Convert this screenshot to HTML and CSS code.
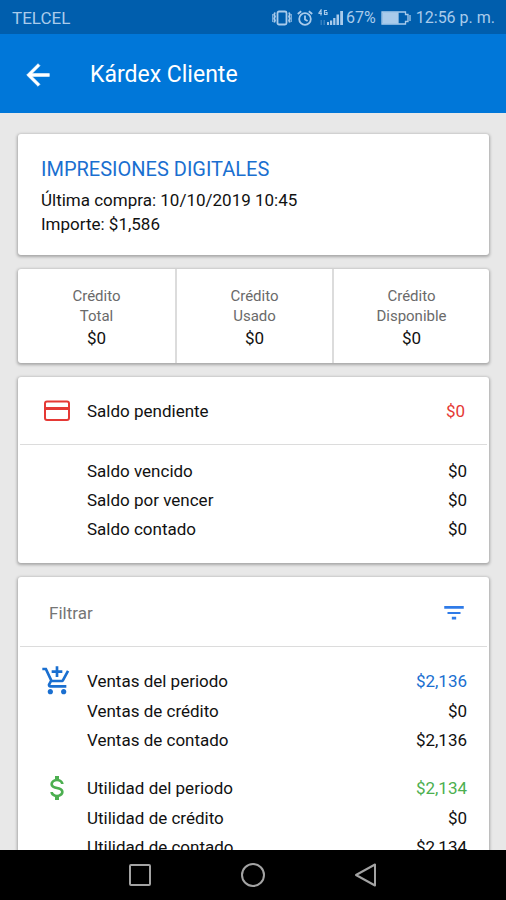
FILE: index.html
```html
<!DOCTYPE html>
<html lang="es">
<head>
<meta charset="utf-8">
<meta name="viewport" content="width=device-width, initial-scale=1">
<title>Kárdex Cliente</title>
<link rel="stylesheet" href="styles.css">
</head>
<body>
<div class="status">
  <span>TELCEL</span>
  <div class="status-right">
    <svg width="20" height="16" viewBox="0 0 20 16" fill="none" stroke="currentColor" stroke-width="1.8"><rect x="5.500" y="1.500" width="9" height="13" rx="1.500"/><path d="M3 2.500l-.8 2 .8 2-.8 2 .8 2-.8 2M17 2.500l.8 2-.8 2 .8 2-.8 2 .8 2"/><path d="M.8 4v8M19.200 4v8" stroke-width="1"/></svg>
    <svg width="16" height="16" viewBox="0 0 16 16" fill="none" stroke="currentColor" stroke-width="1.8"><circle cx="8" cy="9" r="5.800"/><path d="M8 5.500v4l2.600 1.500M.8 4l3.400-2.800M15.200 4l-3.400-2.800"/></svg>
    <svg class="signal" width="26" height="18" viewBox="0 0 26 18" fill="currentColor"><path d="M.5 4.500L3 1v5.500M.5 4.500H4M9 1.500H6.500v4H9V3.500H7.500" fill="none" stroke="currentColor" stroke-width="1.200"/><path d="M9 13h2v3H9zM12 11.500h2.200V16H12zM15.200 9h2.200v7h-2.200zM18.500 5.500H21V16h-2.500zM22.200 2H25v14h-2.800z"/><path d="M2.500 11H4v5H2.500zM5.500 11H7v5H5.500z" opacity=".3"/></svg>
    <span>67%</span>
    <svg class="battery" width="30" height="14" viewBox="0 0 30 14" fill="none" stroke="currentColor" stroke-width="1.300"><path d="M1 1h23.500v2.500h2.500v7h-2.500V13H1z"/><path d="M2 2h15v10H2z" fill="currentColor"/><path d="M29 4v6"/></svg>
    <span>12:56 p. m.</span>
  </div>
</div>
<header class="appbar">
  <button class="icon-button" type="button" aria-label="Atrás">
    <svg width="34" height="34" viewBox="0 0 24 24" fill="currentColor" stroke="currentColor" stroke-width=".4"><path d="M20 11H7.830l5.590-5.590L12 4l-8 8 8 8 1.410-1.410L7.830 13H20v-2z"/></svg>
  </button>
  <h1>Kárdex Cliente</h1>
</header>
<main class="content">
  <section class="card client">
    <h2>IMPRESIONES DIGITALES</h2>
    <p>Última compra: 10/10/2019 10:45</p>
    <p>Importe: $1,586</p>
  </section>
  <section class="card credits">
    <div class="credit"><span>Crédito<br>Total</span><b>$0</b></div>
    <div class="credit"><span>Crédito<br>Usado</span><b>$0</b></div>
    <div class="credit"><span>Crédito<br>Disponible</span><b>$0</b></div>
  </section>
  <section class="card">
    <div class="card-head row red">
      <svg class="icon" width="32" height="32" viewBox="0 0 32 32" fill="none" stroke="currentColor"><rect x="4" y="6.500" width="24" height="18.500" rx="2" stroke-width="2"/><path d="M4 13.500h24" stroke-width="3"/></svg>
      <span class="label">Saldo pendiente</span><span class="value">$0</span>
    </div>
    <div class="balances">
      <div class="row"><span class="label">Saldo vencido</span><span class="value">$0</span></div>
      <div class="row"><span class="label">Saldo por vencer</span><span class="value">$0</span></div>
      <div class="row"><span class="label">Saldo contado</span><span class="value">$0</span></div>
    </div>
  </section>
  <section class="card">
    <div class="card-head filter">
      <span>Filtrar</span>
      <button class="icon-button" type="button" aria-label="Filtrar">
        <svg width="26" height="26" viewBox="0 0 24 24" fill="currentColor"><path d="M10 18h4v-2.500h-4zM3 5.500V8h18V5.500zM6 13h12v-2H6z"/></svg>
      </button>
    </div>
    <div class="group">
      <div class="row lead blue">
        <svg class="icon" width="32" height="32" viewBox="0 0 24 24" fill="currentColor"><path d="M11 9h2V6h3V4h-3V1h-2v3H8v2h3v3zm-4 9c-1.100 0-1.990.9-1.990 2S5.900 22 7 22s2-.9 2-2-.9-2-2-2zm10 0c-1.100 0-1.990.9-1.990 2s.89 2 1.990 2 2-.9 2-2-.9-2-2-2zm-9.830-3.250l.03-.12.9-1.630h7.450c.75 0 1.410-.41 1.750-1.030l3.860-7.010L19.420 4h-.01l-1.100 2-2.760 5H8.530l-.13-.27L6.160 6l-.95-2-.94-2H1v2h2l3.600 7.590-1.350 2.450c-.16.28-.25.61-.25.960 0 1.100.9 2 2 2h12v-2H7.420c-.13 0-.25-.11-.25-.25z"/></svg>
        <span class="label">Ventas del periodo</span><span class="value">$2,136</span>
      </div>
      <div class="row"><span class="label">Ventas de crédito</span><span class="value">$0</span></div>
      <div class="row"><span class="label">Ventas de contado</span><span class="value">$2,136</span></div>
    </div>
    <div class="group">
      <div class="row lead green">
        <svg class="icon" width="32" height="32" viewBox="0 0 24 24" fill="currentColor"><path d="M7 15h2c0 1.080 1.370 2 3 2s3-.92 3-2c0-1.100-1.040-1.500-3.240-2.030C9.640 12.440 7 11.780 7 9c0-1.790 1.470-3.310 3.500-3.820V3h3v2.180C15.530 5.690 17 7.210 17 9h-2c0-1.080-1.370-2-3-2s-3 .92-3 2c0 1.100 1.040 1.500 3.240 2.030C14.360 11.560 17 12.220 17 15c0 1.790-1.470 3.310-3.500 3.820V21h-3v-2.180C8.470 18.310 7 16.790 7 15z"/></svg>
        <span class="label">Utilidad del periodo</span><span class="value">$2,134</span>
      </div>
      <div class="row"><span class="label">Utilidad de crédito</span><span class="value">$0</span></div>
      <div class="row"><span class="label">Utilidad de contado</span><span class="value">$2,134</span></div>
    </div>
  </section>
</main>
<nav class="navbar">
  <button class="icon-button" type="button" aria-label="Recientes"><svg width="24" height="24" viewBox="0 0 24 24" fill="none" stroke="currentColor" stroke-width="2"><rect x="2" y="2" width="20" height="20" rx="1"/></svg></button>
  <button class="icon-button" type="button" aria-label="Inicio"><svg width="24" height="24" viewBox="0 0 24 24" fill="none" stroke="currentColor" stroke-width="2"><circle cx="12" cy="12" r="11"/></svg></button>
  <button class="icon-button" type="button" aria-label="Volver"><svg width="24" height="24" viewBox="0 0 24 24" fill="none" stroke="currentColor" stroke-width="2" stroke-linejoin="round"><path d="M21 1.500v21L2 12z"/></svg></button>
</nav>
</body>
</html>
```
FILE: styles.css
```css
* { box-sizing: border-box; }
body {
  margin: 0;
  height: 100vh;
  display: flex;
  flex-direction: column;
  background: #e8e8e8;
  color: #111;
  font: 17px/24px Roboto, sans-serif;
}
h1, h2, p { margin: 0; font-weight: 400; }
svg { display: block; flex: none; }
.icon-button {
  display: flex;
  padding: 0;
  border: 0;
  background: none;
  color: inherit;
}
.status {
  flex: none;
  display: flex;
  justify-content: space-between;
  align-items: center;
  height: 34px;
  padding: 2px 11px 0 12px;
  background: #005ead;
  color: #a9cbeb;
}
.status-right {
  display: flex;
  align-items: center;
  font-size: 16px;
}
.status-right svg { margin-right: 5px; }
.status-right .signal { margin-right: 2px; }
.status-right .battery { margin: 0 5px; }
.appbar {
  flex: none;
  display: flex;
  align-items: center;
  gap: 35px;
  height: 79px;
  padding: 2px 21px 0;
  background: #0077d9;
  color: #fff;
}
.appbar h1 { font-size: 23px; line-height: 32px; }
.content {
  flex: 1;
  min-height: 0;
  overflow: hidden;
  display: flex;
  flex-direction: column;
  gap: 14px;
  padding: 21px 17px 0 18px;
}
.card {
  flex: none;
  background: #fff;
  border-radius: 3px;
  box-shadow: 0 1px 3px 1px rgba(0, 0, 0, .28);
}
.client { padding: 23px 23px 19px; }
.client h2 {
  margin-bottom: 7px;
  color: #1a6fd0;
  font-size: 20px;
}
.credits {
  display: grid;
  grid-template-columns: repeat(3, 1fr);
  text-align: center;
}
.credit {
  display: flex;
  flex-direction: column;
  padding: 17px 0 13px;
}
.credit + .credit { border-left: 2px solid #dcdcdc; }
.credit span {
  color: #6a6a6a;
  font-size: 15px;
  line-height: 20px;
}
.credit b { font-weight: 400; }
.row {
  display: grid;
  grid-template-columns: 45px 1fr auto;
  align-items: center;
  height: 29px;
  padding: 0 22px 0 24px;
}
.row .label { grid-column: 2; }
.icon { margin-left: -1px; }
.card-head {
  height: 68px;
  margin: 0 2px;
  padding: 0 22px;
  border-bottom: 1px solid #dcdcdc;
}
.balances { padding: 11px 0 20px; }
.filter {
  display: flex;
  justify-content: space-between;
  align-items: center;
  height: 70px;
  padding: 2px 20px 0 29px;
  color: #757575;
}
.filter .icon-button { color: #2f7be8; }
.group { padding-top: 18px; }
.group .lead { height: 31px; }
.red .icon, .red .value { color: #e53935; }
.blue .icon, .blue .value { color: #1a6fd0; }
.green .icon, .green .value { color: #4caf50; }
.navbar {
  flex: none;
  display: flex;
  justify-content: center;
  align-items: center;
  gap: 89px;
  height: 50px;
  background: #000;
  color: #a3a3a3;
}
```
